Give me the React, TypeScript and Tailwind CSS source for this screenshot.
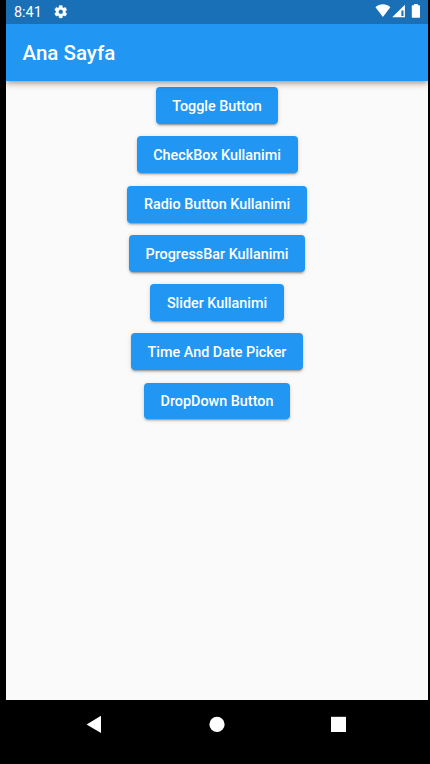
const buttons = [
  { label: 'Toggle Button', width: 'w-[122px]' },
  { label: 'CheckBox Kullanimi', width: 'w-[161px]' },
  { label: 'Radio Button Kullanimi', width: 'w-[179.5px]' },
  { label: 'ProgressBar Kullanimi', width: 'w-[176px]' },
  { label: 'Slider Kullanimi', width: 'w-[133.5px]' },
  { label: 'Time And Date Picker', width: 'w-[172px]' },
  { label: 'DropDown Button', width: 'w-[146px]' },
];

function StatusBar() {
  return (
    <div className="flex h-6 items-center bg-[#1a70b7] pl-[8px] text-white">
      <span className="w-[39px] pt-[2px] text-[14.4px] leading-[22px]">8:41</span>
      <svg className="mb-[1px] h-[15.5px] w-[15.5px]" viewBox="0 0 24 24" fill="currentColor" stroke="currentColor" strokeWidth="0.6">
        <path d="M19.14 12.94c.04-.3.06-.61.06-.94 0-.32-.02-.64-.07-.94l2.03-1.58c.18-.14.23-.41.12-.61l-1.92-3.32c-.12-.22-.37-.29-.59-.22l-2.39.96c-.5-.38-1.03-.7-1.62-.94l-.36-2.54c-.04-.24-.24-.41-.48-.41h-3.84c-.24 0-.43.17-.47.41l-.36 2.54c-.59.24-1.13.57-1.62.94l-2.39-.96c-.22-.08-.47 0-.59.22L2.74 8.87c-.12.21-.08.47.12.61l2.03 1.58c-.05.3-.09.63-.09.94s.02.64.07.94l-2.03 1.58c-.18.14-.23.41-.12.61l1.92 3.32c.12.22.37.29.59.22l2.39-.96c.5.38 1.03.7 1.62.94l.36 2.54c.05.24.24.41.48.41h3.84c.24 0 .44-.17.47-.41l.36-2.54c.59-.24 1.13-.56 1.62-.94l2.39.96c.22.08.47 0 .59-.22l1.92-3.32c.12-.22.07-.47-.12-.61l-2.01-1.58zM12 15.6c-1.98 0-3.6-1.62-3.6-3.6s1.62-3.6 3.6-3.6 3.6 1.62 3.6 3.6-1.62 3.6-3.6 3.6z" />
      </svg>
      <svg className="ml-auto h-6 w-[60px]" viewBox="0 0 60 24" fill="currentColor">
        <path d="M7.5 7.2C11.7 3.4 18.1 3.4 22.3 7.2L14.9 17Z" />
        <path fillRule="evenodd" d="M36.9 4.8V17.2H24.2ZM35.5 10.4H33.4V16H35.5Z" />
        <path d="M46 4h3.8v1.3h1.5q.7 0 .7.7v11q0 .7-.7.7h-6.8q-.7 0-.7-.7V6q0-.7.7-.7H46Z" />
      </svg>
    </div>
  );
}

function NavigationBar() {
  return (
    <div className="flex h-16 bg-black text-white">
      <svg className="h-[50px] w-full" viewBox="0 0 422 50" fill="currentColor">
        <path d="M95 15.7V33L80.6 24.4Z" />
        <circle cx="211" cy="24.4" r="7.6" />
        <path d="M325 16.8h15v15.2h-15Z" />
      </svg>
    </div>
  );
}

export default function App() {
  return (
    <div className="h-[764px] w-[430px] overflow-hidden bg-black pr-[2px] pl-[6px] font-['Roboto',sans-serif]">
      <div className="flex h-full flex-col overflow-hidden">
        <header className="z-10 shadow-[0_2px_4px_-1px_rgba(0,0,0,0.2),0_4px_5px_rgba(0,0,0,0.14),0_1px_10px_rgba(0,0,0,0.12)]">
          <StatusBar />
          <div className="flex h-[57px] items-center bg-[#2196f3] pt-[2px] pl-[16.5px]">
            <h1 className="text-[20.5px] font-medium text-white">Ana Sayfa</h1>
          </div>
        </header>
        <main className="flex flex-1 flex-col items-center gap-[12.35px] bg-[#fafafa] pt-[6.2px]">
          {buttons.map(({ label, width }) => (
            <button
              key={label}
              className={`${width} h-[36.9px] shrink-0 rounded-[4px] bg-[#2196f3] pt-[2px] text-center text-[14.36px] font-medium whitespace-nowrap text-white shadow-[0_3px_1px_-2px_rgba(0,0,0,0.2),0_2px_2px_rgba(0,0,0,0.14),0_1px_5px_rgba(0,0,0,0.12)]`}
            >
              {label}
            </button>
          ))}
        </main>
        <NavigationBar />
      </div>
    </div>
  );
}
